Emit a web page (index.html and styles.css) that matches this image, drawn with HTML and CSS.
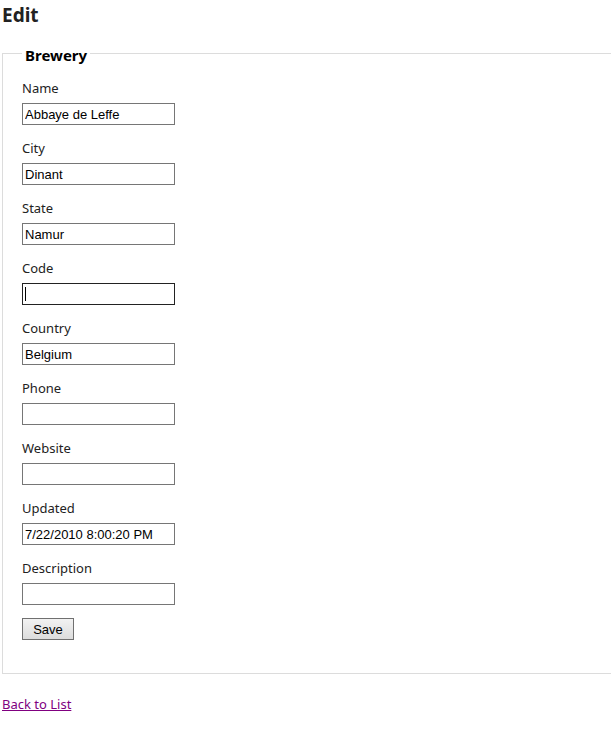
FILE: index.html
```html
<!DOCTYPE html>
<html>
<head>
<meta charset="utf-8">
<title>Edit</title>
<link rel="stylesheet" href="styles.css">
</head>
<body>
<h2 class="title">Edit</h2>
<form class="form">
  <fieldset class="box">
    <legend class="legend">Brewery</legend>
    <div class="field">
      <label class="label">Name</label>
      <input class="input" type="text" value="Abbaye de Leffe">
    </div>
    <div class="field">
      <label class="label">City</label>
      <input class="input" type="text" value="Dinant">
    </div>
    <div class="field">
      <label class="label">State</label>
      <input class="input" type="text" value="Namur">
    </div>
    <div class="field">
      <label class="label">Code</label>
      <span class="focus-wrap"><input class="input input-focus" type="text" value=""><span class="caret"></span></span>
    </div>
    <div class="field">
      <label class="label">Country</label>
      <input class="input" type="text" value="Belgium">
    </div>
    <div class="field">
      <label class="label">Phone</label>
      <input class="input" type="text" value="">
    </div>
    <div class="field">
      <label class="label">Website</label>
      <input class="input" type="text" value="">
    </div>
    <div class="field">
      <label class="label">Updated</label>
      <input class="input" type="text" value="7/22/2010 8:00:20 PM">
    </div>
    <div class="field">
      <label class="label">Description</label>
      <input class="input" type="text" value="">
    </div>
    <div class="actions">
      <button class="btn" type="button">Save</button>
    </div>
  </fieldset>
</form>
<div class="back">
  <a class="link" href="#">Back to List</a>
</div>
</body>
</html>
```
FILE: styles.css
```css
html, body {
  margin: 0;
  padding: 0;
  background: #fff;
  overflow: hidden;
}
body {
  padding: 0 0 0 2px;
  font-family: "Segoe UI", "Noto Sans", "Open Sans", sans-serif;
  font-size: 13px;
  color: #222;
}
.title {
  margin: 0;
  font-size: 19px;
  line-height: 30px;
  font-weight: bold;
  color: #222;
}
.form {
  margin: 0;
  padding-top: 12px;
}
.box {
  margin: 0;
  border: 1px solid #dcdcdc;
  border-right: none;
  padding: 14px 0 33px 19px;
  min-width: 0;
}
.legend {
  font-size: 15px;
  font-weight: bold;
  color: #000;
  padding: 4px 3px 0;
  margin-left: 0;
  line-height: 18px;
}
.field {
  display: flex;
  flex-direction: column;
  align-items: flex-start;
  gap: 5px;
  margin-bottom: 13px;
}
.label {
  line-height: 20px;
  color: #222;
}
.input {
  box-sizing: border-box;
  width: 153px;
  height: 22px;
  margin: 0;
  padding: 1px 2px;
  border: 1px solid #767676;
  font-family: "Liberation Sans", Arial, sans-serif;
  font-size: 13px;
  color: #000;
  background: #fff;
  outline: none;
}
.input-focus {
  border-color: #222;
}
.focus-wrap {
  position: relative;
  display: block;
  height: 22px;
}
.caret {
  position: absolute;
  left: 3px;
  top: 4px;
  width: 1px;
  height: 14px;
  background: #000;
}
.actions {
  display: flex;
}
.btn {
  box-sizing: border-box;
  width: 52px;
  height: 22px;
  margin: 0;
  padding: 0;
  border: 1px solid #707070;
  background: linear-gradient(#f2f2f2, #dcdcdc);
  font-family: "Liberation Sans", Arial, sans-serif;
  font-size: 13px;
  color: #000;
}
.back {
  margin-top: 21px;
  line-height: 18px;
}
.link {
  color: #800080;
  text-decoration: underline;
}
```
